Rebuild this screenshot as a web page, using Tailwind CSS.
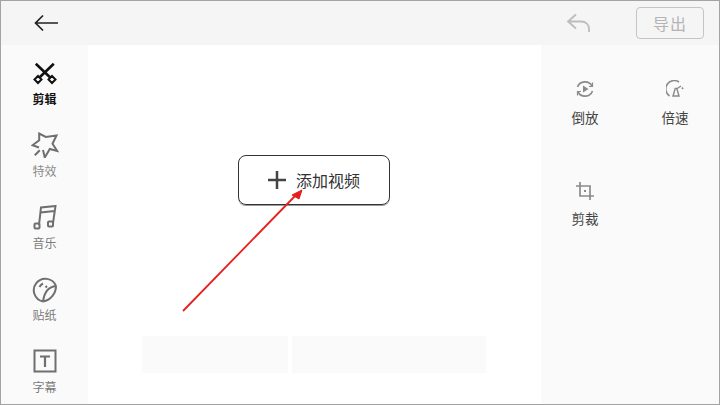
<!DOCTYPE html>
<html lang="zh">
  <head>
    <meta charset="UTF-8" />
    <title>视频剪辑</title>
    <script src="https://cdn.jsdelivr.net/npm/@tailwindcss/browser@4"></script>
  </head>
  <body class="bg-white">
    <div class="relative flex flex-col w-[720px] h-[405px] overflow-hidden border border-[#a3a3a3] bg-white font-['Noto_Sans_CJK_SC','Noto_Sans',sans-serif]">
      <!-- Top bar -->
      <header class="flex items-center shrink-0 h-[44px] bg-[#f5f5f5]">
        <svg class="ml-[33px] w-[24px] h-[18px]" viewBox="0 0 24 18" fill="none" stroke="#222" stroke-width="1.7">
          <path d="M1.500 9H24M9 1.500 1.500 9 9 16.500" />
        </svg>
        <svg class="ml-auto w-[25px] h-[20px]" viewBox="0 0 25 20" fill="none" stroke="#bdbdbd" stroke-width="1.8">
          <path d="M10 1.500 2 8.500l8 7M2 8.500h13c5 0 8 3 8 7.500v3" />
        </svg>
        <div class="flex items-center justify-center ml-[45px] mr-[15px] w-[68px] h-[32px] rounded-[4px] border border-[#c4c4c4] text-[16px] tracking-[1px] text-[#b4b4b4]">导出</div>
      </header>

      <div class="flex flex-1 min-h-0">
        <!-- Left tools -->
        <aside class="flex flex-col shrink-0 w-[87px] pt-[16px] bg-[#fafafa]">
          <div class="flex flex-col shrink-0 items-center h-[72px]">
            <svg class="w-[26px] h-[24px]" viewBox="0 0 26 24" fill="none" stroke="#111" stroke-width="2.600">
              <path d="M3.800 2.700 18.500 16.700M21.800 2.700 7.200 16.700" />
              <path d="m6 15 3.500 3.500-3.500 3.500-3.500-3.500zM20 15l-3.500 3.500 3.500 3.500 3.500-3.500z" stroke-width="2" />
            </svg>
            <span class="mt-[5px] text-[12px] leading-[18px] font-bold text-[#111]">剪辑</span>
          </div>
          <div class="flex flex-col shrink-0 items-center h-[72px]">
            <svg class="-mt-[1px] w-[28px] h-[26px]" viewBox="0 0 28 26" fill="none" stroke="#6f6f6f" stroke-width="2">
              <path d="M12 18 13.800 25.500 18.800 17 26.200 19 21.500 11.700 25.500 3.500 14.800 5 8.200 1.500 8.200 8.300 1.500 13.300 8 15.500M3.800 23.300 8.800 18.300" />
            </svg>
            <span class="mt-[4px] text-[12px] leading-[18px] text-[#8a8a8a]">特效</span>
          </div>
          <div class="flex flex-col shrink-0 items-center h-[72px]">
            <svg class="w-[24px] h-[25px]" viewBox="0 0 24 25" fill="none" stroke="#6f6f6f" stroke-width="2">
              <path d="M6 20 8 2.500 22.500 1 20 18M7.500 7.500l14-1.500" />
              <rect x="1.500" y="18.500" width="5" height="5" rx="1" />
              <rect x="15" y="16.500" width="5" height="5" rx="1" />
            </svg>
            <span class="mt-[4px] text-[12px] leading-[18px] text-[#7a7a7a]">音乐</span>
          </div>
          <div class="flex flex-col shrink-0 items-center h-[72px]">
            <svg class="w-[26px] h-[26px]" viewBox="0 0 26 26" fill="none" stroke="#6f6f6f" stroke-width="2">
              <path d="M24 9A11.500 11.500 0 1 0 11 24.500" />
              <path d="M24 9C18 9.500 12.500 14 11 24.500M24 9C24 16 19 23 11 24.500M7.500 10c.7-1.500 1.800-2.700 3.500-3.500M13.500 10.500l1.500-1.500" />
            </svg>
            <span class="mt-[3px] text-[12px] leading-[18px] text-[#7a7a7a]">贴纸</span>
          </div>
          <div class="flex flex-col shrink-0 items-center h-[72px]">
            <svg class="w-[24px] h-[24px]" viewBox="0 0 24 24" fill="none" stroke="#6f6f6f">
              <rect x="1.500" y="1.500" width="21" height="21" stroke-width="2" />
              <path d="M7 7.500h10M12 7.500V18" stroke-width="2.200" />
            </svg>
            <span class="mt-[5px] text-[12px] leading-[18px] text-[#7a7a7a]">字幕</span>
          </div>
        </aside>

        <!-- Canvas -->
        <main class="flex flex-col flex-1 items-center bg-white">
          <button class="flex items-center justify-center gap-[10px] mt-[110px] mr-[1px] w-[152px] h-[50px] rounded-[8px] border border-[#333] shadow-[0_1px_0_#999] text-[16px] text-[#333]">
            <svg class="w-[18px] h-[18px]" viewBox="0 0 18 18" stroke="#444" stroke-width="2.500"><path d="M0 9h18M9 0v18" /></svg>
            添加视频
          </button>
          <div class="flex gap-[4px] mt-[131px] mr-[1px] h-[37px]">
            <div class="w-[146px] bg-[#fafafa]"></div>
            <div class="w-[194px] bg-[#fafafa]"></div>
          </div>
        </main>

        <!-- Right tools -->
        <aside class="grid grid-cols-2 content-start shrink-0 w-[178px] pt-[35px] gap-y-[55px] bg-[#fafafa]">
          <div class="flex flex-col items-center w-[88px]">
            <svg class="w-[18px] h-[18px]" viewBox="0 0 18 18" fill="none" stroke="#8a8a8a" stroke-width="1.600">
              <path d="M1.500 7A8 8 0 0 1 16 6M16.500 11A8 8 0 0 1 2 12" />
              <path d="M16.500 2.500V6.500H13M1.500 15.500V11.500H5" stroke-width="1.200" />
              <path d="M7 5.500 12.500 9 7 12.500Z" fill="#8a8a8a" stroke="none" />
            </svg>
            <span class="mt-[9px] text-[13.5px] leading-[20px] text-[#444]">倒放</span>
          </div>
          <div class="flex flex-col items-center w-[90px]">
            <svg class="w-[18px] h-[18px]" viewBox="0 0 18 18" fill="none" stroke="#8a8a8a" stroke-width="1.600">
              <path d="M3.500 16A8 8 0 0 1 13 2" />
              <path d="M7 16h6L10.800 8.500H9.200ZM15 6l-4.500 3" stroke-width="1.400" />
              <path d="M16 7.500 17 9" />
            </svg>
            <span class="mt-[9px] text-[13.5px] leading-[20px] text-[#444]">倍速</span>
          </div>
          <div class="flex flex-col items-center w-[88px]">
            <svg class="w-[18px] h-[18px]" viewBox="0 0 18 18" fill="none" stroke="#8a8a8a" stroke-width="1.700">
              <path d="M0 4h14v14M4 0v14h14" />
              <rect x="8" y="8" width="2" height="2" fill="#8a8a8a" stroke="none" />
            </svg>
            <span class="mt-[8px] text-[13.5px] leading-[20px] text-[#444]">剪裁</span>
          </div>
        </aside>
      </div>

      <!-- Annotation arrow -->
      <svg class="absolute left-[180px] top-[188px] w-[124px] h-[126px]" viewBox="0 0 124 126" fill="none">
        <path d="M2 122 114 7" stroke="#e61e1e" stroke-width="1.800" />
        <path d="M121 1 118 10 111 6Z" fill="#e61e1e" stroke="#e61e1e" />
      </svg>
    </div>
  </body>
</html>
